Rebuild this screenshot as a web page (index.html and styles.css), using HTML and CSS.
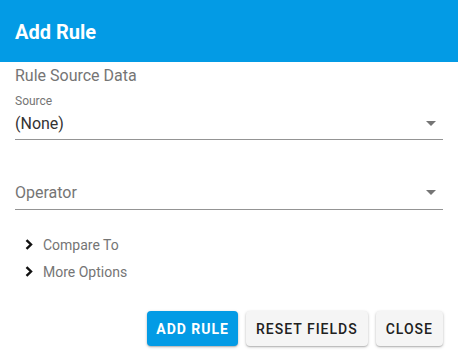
FILE: index.html
```html
<!DOCTYPE html>
<html lang="en">
<head>
<meta charset="UTF-8">
<title>Add Rule</title>
<link rel="stylesheet" href="styles.css">
</head>
<body>
    <div class="dialog">
        <div class="dialog-header">Add Rule</div>

        <div class="dialog-body">
            <div class="section-title">Rule Source Data</div>

            <div class="select-field">
                <div class="select-label">Source</div>
                <div class="select-row">
                    <span class="select-value">(None)</span>
                    <svg class="drop-arrow" viewBox="0 0 24 24" width="24" height="24"><path d="M7 10l5 5 5-5z"/></svg>
                </div>
            </div>

            <div class="select-field select-empty">
                <div class="select-row">
                    <span class="select-placeholder">Operator</span>
                    <svg class="drop-arrow" viewBox="0 0 24 24" width="24" height="24"><path d="M7 10l5 5 5-5z"/></svg>
                </div>
            </div>

            <div class="expanders">
                <div class="expander">
                    <svg class="chevron" viewBox="0 0 8 11" width="8" height="11"><polyline points="1.5,1.2 6,5.5 1.5,9.8"/></svg>
                    <span>Compare To</span>
                </div>
                <div class="expander">
                    <svg class="chevron" viewBox="0 0 8 11" width="8" height="11"><polyline points="1.5,1.2 6,5.5 1.5,9.8"/></svg>
                    <span>More Options</span>
                </div>
            </div>
        </div>

        <div class="dialog-actions">
            <button class="btn btn-primary">Add Rule</button>
            <button class="btn">Reset Fields</button>
            <button class="btn">Close</button>
        </div>
    </div>
</body>
</html>
```

FILE: styles.css
```css
body {
    margin: 0;
    padding: 0;
    background-color: #fff;
    font-family: Roboto, "Liberation Sans", Arial, sans-serif;
}

.dialog {
    width: 458px;
    height: 360px;
    background-color: #fff;
}

.dialog-header {
    height: 62px;
    box-sizing: border-box;
    padding: 20px 15px 0;
    background-color: #039be5;
    color: #fff;
    font-size: 20px;
    font-weight: 700;
    line-height: 24px;
}

.dialog-body {
    padding: 0 15px;
}

.section-title {
    margin-top: 4px;
    font-size: 16px;
    line-height: 20px;
    color: #757575;
}

.select-field {
    margin-top: 8px;
    padding-bottom: 4px;
    border-bottom: 1px solid #949494;
}

.select-empty {
    margin-top: 40px;
    padding-bottom: 5px;
}

.select-label {
    font-size: 12px;
    line-height: 14px;
    color: #757575;
}

.select-row {
    display: flex;
    align-items: center;
    justify-content: space-between;
    height: 24px;
    margin-top: 3px;
}

.select-empty .select-row {
    margin-top: 0;
}

.select-value {
    font-size: 16px;
    color: #333;
}

.select-placeholder {
    font-size: 16px;
    color: #757575;
}

.drop-arrow {
    fill: #757575;
}

.expanders {
    margin-top: 21px;
}

.expander {
    display: flex;
    align-items: center;
    height: 27px;
    padding-left: 10px;
    font-size: 14px;
    color: #757575;
}

.chevron {
    fill: none;
    stroke: #111;
    stroke-width: 2.4;
    margin-right: 10px;
}

.dialog-actions {
    display: flex;
    justify-content: flex-end;
    gap: 8px;
    margin-top: 26px;
    padding-right: 15px;
}

.btn {
    height: 35px;
    padding: 0 10px;
    border: none;
    border-radius: 4px;
    background-color: #f5f5f5;
    color: #212121;
    font-family: Roboto, "Liberation Sans", Arial, sans-serif;
    font-size: 14px;
    font-weight: 500;
    letter-spacing: 1px;
    text-transform: uppercase;
    box-shadow: 0 1px 3px rgba(0, 0, 0, 0.25), 0 1px 1px rgba(0, 0, 0, 0.12);
    cursor: pointer;
}

.btn-primary {
    padding: 0 9px;
    background-color: #039be5;
    color: #fff;
    font-weight: 700;
}
```
